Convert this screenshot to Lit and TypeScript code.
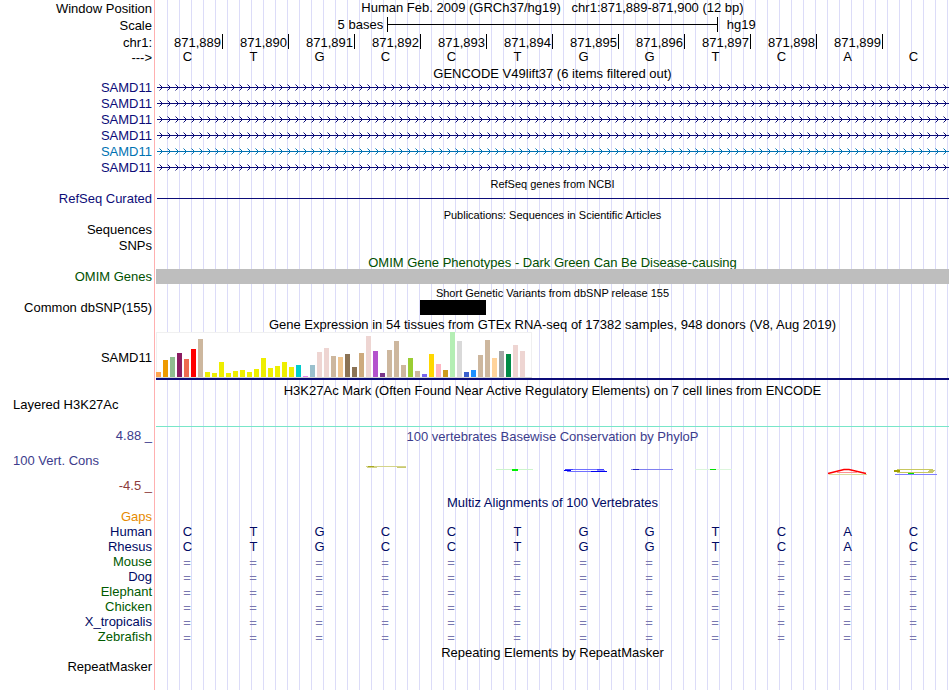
import { LitElement, html, svg, css, nothing, TemplateResult } from "lit";
import { customElement, property } from "lit/decorators.js";

const BASES = ["C", "T", "G", "C", "C", "T", "G", "G", "T", "C", "A", "C"];
const FIRST = 871889;

// Median expression per tissue: [bar colour, bar height]
const TISSUES: [string, number][] = [
  ["#ffa54f", 5], ["#ee9a00", 17], ["#8fbc8f", 20], ["#8b1c62", 24], ["#ee6a50", 18],
  ["#ff0000", 28], ["#cdb79e", 38], ["#eeee00", 5], ["#eeee00", 4], ["#eeee00", 15],
  ["#eeee00", 4], ["#eeee00", 6], ["#eeee00", 7], ["#eeee00", 5], ["#eeee00", 8],
  ["#eeee00", 19], ["#eeee00", 9], ["#eeee00", 11], ["#eeee00", 15], ["#eeee00", 10],
  ["#00cdcd", 12], ["#ee82ee", 1], ["#9ac0cd", 12], ["#eed5d2", 25], ["#eed5d2", 29],
  ["#cdb79e", 21], ["#eec591", 20], ["#8b7355", 23], ["#8b7355", 10], ["#cdaa7d", 24],
  ["#eed5d2", 41], ["#b452cd", 26], ["#7a378b", 4], ["#cdb79e", 27], ["#cdb79e", 36],
  ["#cdb79e", 12], ["#9acd32", 19], ["#cdb79e", 6], ["#7a67ee", 3], ["#ffd700", 23],
  ["#ffb6c1", 13], ["#cd9b1d", 7], ["#b4eeb4", 45], ["#d9d9d9", 36], ["#3a5fcd", 5],
  ["#1e90ff", 7], ["#cdb79e", 22], ["#cdb79e", 37], ["#ffd39b", 19], ["#a6a6a6", 26],
  ["#008b45", 23], ["#eed5d2", 32], ["#eed5d2", 26], ["#ff00ff", 0],
];

const SPECIES: [string, string, string[] | null][] = [
  ["Human", "navy", BASES],
  ["Rhesus", "navy", BASES],
  ["Mouse", "leaf", null],
  ["Dog", "navy", null],
  ["Elephant", "leaf", null],
  ["Chicken", "leaf", null],
  ["X_tropicalis", "navy", null],
  ["Zebrafish", "leaf", null],
];

// Conservation marks, one drawing per base column of 66 units
const MARKS: Record<number, TemplateResult> = {
  3: svg`
    <rect x="11" y="22" width="40" height="1" fill="#d4d48a"/>
    <rect x="13" y="22" width="6" height="1" fill="#a8a820"/>
    <rect x="12" y="23" width="10" height="1" fill="#d4d48a"/>
    <rect x="42" y="23" width="9" height="1" fill="#c8c870"/>`,
  5: svg`
    <rect x="9" y="25" width="37" height="1" fill="#ccf4cc"/>
    <rect x="25" y="25" width="6" height="2" fill="#00f000"/>`,
  6: svg`
    <rect x="16" y="25" width="34" height="1" fill="#7070ff"/>
    <rect x="12" y="25" width="8" height="1" fill="#4040ff"/>
    <rect x="11" y="26" width="7" height="1" fill="#0000f0"/>
    <rect x="44" y="25" width="7" height="1" fill="#4040ff"/>
    <rect x="44" y="26" width="8" height="1" fill="#9090ff"/>
    <rect x="14" y="27" width="26" height="1" fill="#7070ff"/>
    <rect x="38" y="27" width="16" height="1" fill="#0000f0"/>`,
  7: svg`
    <rect x="12" y="25" width="42" height="1" fill="#8080f0"/>
    <rect x="14" y="25" width="6" height="1" fill="#2020c0"/>`,
  8: svg`
    <rect x="10" y="25" width="37" height="1" fill="#dcf6dc"/>
    <rect x="25" y="25" width="6" height="1" fill="#00e000"/>`,
  10: svg`
    <rect x="12" y="30" width="38" height="1" fill="#dada9a"/>
    <path d="M11 29.500L27 25.500H32L49 29.500" fill="none" stroke="#ff0000" stroke-width="1.500"/>
    <rect x="20" y="28" width="20" height="1" fill="#ff9090"/>`,
  11: svg`
    <rect x="14" y="25" width="36" height="1" fill="#c8c860"/>
    <rect x="11" y="26" width="6" height="2" fill="#a0a000"/>
    <rect x="46" y="26" width="6" height="1" fill="#c8c870"/>
    <rect x="45" y="27" width="6" height="1" fill="#c8c870"/>
    <rect x="14" y="28" width="36" height="1" fill="#c8c860"/>
    <rect x="25" y="29" width="6" height="1" fill="#00e000"/>
    <rect x="12" y="30" width="42" height="1" fill="#8080ff"/>`,
};

@customElement("gene-line")
class GeneLine extends LitElement {
  @property() color = "#0c0c78";

  static styles = css`
    :host { display: block; height: 16px; margin-left: 1px; }
    svg { display: block; width: 100%; height: 100%; }
  `;

  render() {
    return html`<svg shape-rendering="crispEdges" fill=${this.color} aria-hidden="true">
      <defs>
        <pattern id="chevrons" width="8" height="16" patternUnits="userSpaceOnUse">
          <rect x="2" y="4" width="1" height="1" opacity="0.5"/>
          <rect x="3" y="5" width="1" height="1"/>
          <rect x="4" y="6" width="1" height="1"/>
          <rect x="5" y="7" width="1" height="1"/>
          <rect x="4" y="8" width="1" height="1"/>
          <rect x="3" y="9" width="1" height="1"/>
          <rect x="2" y="10" width="1" height="1" opacity="0.5"/>
        </pattern>
      </defs>
      <rect y="7" width="100%" height="1"/>
      <rect width="100%" height="16" fill="url(#chevrons)"/>
    </svg>`;
  }
}

@customElement("app-root")
class AppRoot extends LitElement {
  static styles = css`
    :host {
      display: block;
      min-height: 100vh;
      font: 13px/15px "Liberation Sans", Arial, sans-serif;
      color: #000;
      background:
        linear-gradient(#ffb0b0, #ffb0b0) 154px 0 / 1px 100% no-repeat,
        linear-gradient(#fff, #fff) 0 0 / 156px 100% no-repeat,
        linear-gradient(to right, transparent 11px, #dcdcf8 11px) 156px 0 / 12px 100%,
        #fff;
    }
    .row {
      display: grid;
      grid-template-columns: 156px minmax(0, 1fr);
      box-sizing: border-box;
      padding-right: 1px;
      white-space: nowrap;
    }
    .label { padding-right: 4px; text-align: right; }
    .label.left { padding-left: 13px; text-align: left; }
    .data { grid-column: 2; }
    .title { grid-column: 2; text-align: center; font-size: 13px; font-weight: normal; margin: 0; }
    .small { font-size: 11px; }

    .h14 { height: 14px; }
    .h15 { height: 15px; }
    .h16 { height: 16px; }
    .h17 { height: 17px; }
    .h30 { height: 30px; }
    .h34 { height: 34px; }
    .h48 { height: 48px; }
    .p1 { padding-top: 1px; }
    .p2 { padding-top: 2px; }
    .p3 { padding-top: 3px; }
    .p9 { padding-top: 9px; }
    .p18 { padding-top: 18px; }

    .gene { color: #0c0c78; }
    .alt { color: #0072b2; }
    .navy { color: #000a64; }
    .leaf { color: #005a00; }
    .omim { color: #005000; }
    .gaps { color: #e68a00; }
    .cons { color: #3c3c8c; }
    .neg { color: #8c3c3c; }

    .columns {
      display: grid;
      grid-template-columns: repeat(12, minmax(0, 1fr));
      margin-left: 1px;
    }
    .base { padding-right: 5px; text-align: center; }
    .same { padding: 1px 6px 0 0; color: #7878b0; }
    .tick {
      height: 15px;
      box-sizing: border-box;
      margin-top: 1px;
      padding: 1px 1px 0 0;
      border-right: 1px solid #000;
      text-align: right;
    }
    .scale { display: grid; grid-template-columns: minmax(0, 1fr) 41.7% minmax(0, 1fr); }
    .scale .left-end { padding: 1px 4px 0 0; text-align: right; }
    .scale .right-end { padding: 1px 0 0 9px; }
    .ruler {
      display: flex;
      align-items: center;
      height: 15px;
      margin-top: 1px;
      border: solid #000;
      border-width: 0 1px;
    }
    .ruler::before { content: ""; flex: 1; height: 1px; background: #000; }

    .line { height: 1px; margin: 7px 0 0 1px; background: #0c0c78; }
    .bar { background: #bebebe; }
    .flush { margin-left: 0; }
    .variant { grid-column: 5; height: 15px; background: #000; }
    .teal { border-bottom: 1px solid #78e6c8; }
    .gtex { border-bottom: 2px solid #0c0c78; }
    .chart {
      display: flex;
      align-items: flex-end;
      gap: 2px;
      width: max-content;
      height: 46px;
      box-sizing: border-box;
      background: #fff;
      border-bottom: 1px solid #d2d2d2;
      box-shadow: inset 0 1px #f0f0f0, inset 1px 0 #f0f0f0, inset -1px 0 #f0f0f0;
    }
    .tissue { width: 5px; }
    .mark { display: block; width: 66px; height: 34px; }
  `;

  private title(text: string, cls: string) {
    return html`<div class="row ${cls}"><h2 class="title">${text}</h2></div>`;
  }

  private smallTitle(text: string, cls: string) {
    return html`<div class="row ${cls}"><h2 class="title small">${text}</h2></div>`;
  }

  private position(i: number) {
    return (FIRST + i).toLocaleString("en-US");
  }

  render() {
    return html`
      <div class="row h16">
        <div class="label p1">Window Position</div>
        <h1 class="title">Human Feb. 2009 (GRCh37/hg19) &nbsp; chr1:871,889-871,900 (12 bp)</h1>
      </div>
      <div class="row h17">
        <div class="label p2">Scale</div>
        <div class="data scale">
          <div class="left-end">5 bases</div>
          <div class="ruler"></div>
          <div class="right-end">hg19</div>
        </div>
      </div>
      <div class="row h16">
        <div class="label p2">chr1:</div>
        <div class="data columns">
          ${BASES.slice(0, 11).map((_, i) => html`<div class="tick">${this.position(i)}</div>`)}
        </div>
      </div>
      <div class="row h17">
        <div class="label p1">---&gt;</div>
        <div class="data columns">${BASES.map((b) => html`<div class="base">${b}</div>`)}</div>
      </div>

      ${this.title("GENCODE V49lift37 (6 items filtered out)", "h14")}
      ${[0, 1, 2, 3, 4, 5].map((i) => html`
        <div class="row h16">
          <div class="label ${i === 4 ? "alt" : "gene"}">SAMD11</div>
          <gene-line class="data" color=${i === 4 ? "#0072b2" : "#0c0c78"}></gene-line>
        </div>`)}

      ${this.smallTitle("RefSeq genes from NCBI", "h15 p1")}
      <div class="row h16">
        <div class="label gene">RefSeq Curated</div>
        <div class="data line"></div>
      </div>

      ${this.smallTitle("Publications: Sequences in Scientific Articles", "h15 p1")}
      <div class="row h16"><div class="label">Sequences</div></div>
      <div class="row h16"><div class="label">SNPs</div></div>

      ${this.title("OMIM Gene Phenotypes - Dark Green Can Be Disease-causing", "h15 p1 omim")}
      <div class="row h15">
        <div class="label omim">OMIM Genes</div>
        <div class="data bar"></div>
      </div>

      ${this.smallTitle("Short Genetic Variants from dbSNP release 155", "h16 p2")}
      <div class="row h15">
        <div class="label">Common dbSNP(155)</div>
        <div class="data columns flush"><div class="variant"></div></div>
      </div>

      ${this.title("Gene Expression in 54 tissues from GTEx RNA-seq of 17382 samples, 948 donors (V8, Aug 2019)", "h17 p2")}
      <div class="row h48">
        <div class="label p18">SAMD11</div>
        <div class="data gtex">
          <div class="chart">
            ${TISSUES.map(([color, h]) => html`<div class="tissue" style="height:${h}px;background:${color}"></div>`)}
          </div>
        </div>
      </div>

      ${this.title("H3K27Ac Mark (Often Found Near Active Regulatory Elements) on 7 cell lines from ENCODE", "h17 p3")}
      <div class="row h30">
        <div class="label left">Layered H3K27Ac</div>
        <div class="data teal"></div>
      </div>

      <div class="row h17 cons">
        <div class="label p1">4.88 _</div>
        <h2 class="title p2">100 vertebrates Basewise Conservation by PhyloP</h2>
      </div>
      <div class="row h34">
        <div class="label left cons p9">100 Vert. Cons</div>
        <div class="data columns">
          ${BASES.map((_, i) => html`<div>${MARKS[i]
            ? html`<svg class="mark" viewBox="0 0 66 34" aria-hidden="true">${MARKS[i]}</svg>`
            : nothing}</div>`)}
        </div>
      </div>
      <div class="row h15"><div class="label neg">-4.5 _</div></div>

      ${this.title("Multiz Alignments of 100 Vertebrates", "h16 p2 navy")}
      <div class="row h15"><div class="label gaps">Gaps</div></div>
      ${SPECIES.map(([name, cls, seq]) => html`
        <div class="row h15 ${cls}">
          <div class="label">${name}</div>
          <div class="data columns">
            ${BASES.map((_, i) => seq
              ? html`<div class="base">${seq[i]}</div>`
              : html`<div class="base same">=</div>`)}
          </div>
        </div>`)}

      ${this.title("Repeating Elements by RepeatMasker", "h15 p1")}
      <div class="row h15"><div class="label">RepeatMasker</div></div>
    `;
  }
}
